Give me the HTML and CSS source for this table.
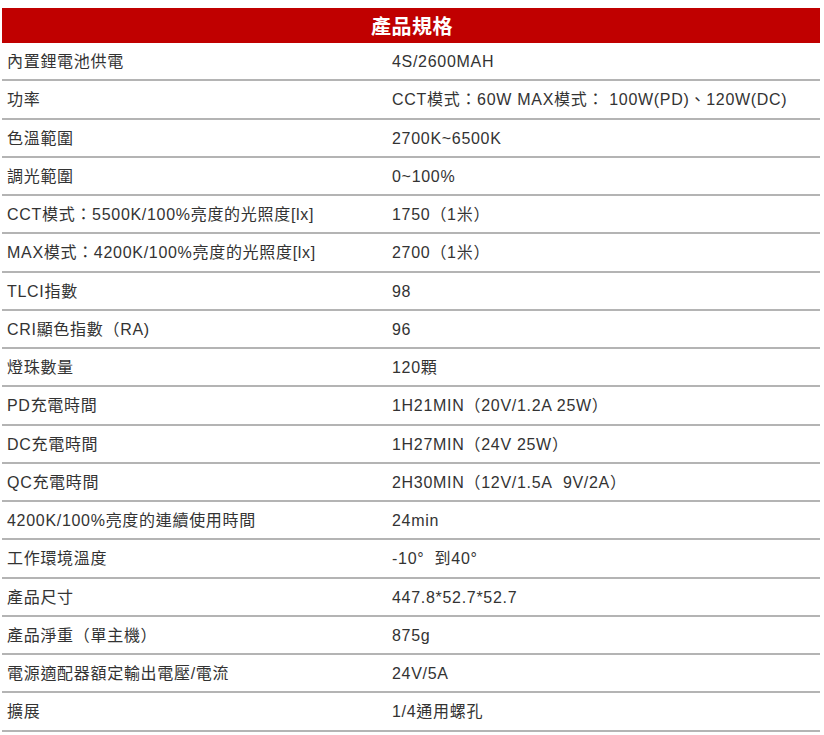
FILE: index.html
```html
<!DOCTYPE html>
<html lang="zh-Hant">
<head>
<meta charset="utf-8">
<title>產品規格</title>
<link rel="stylesheet" href="styles.css">
</head>
<body>
<div class="spec">
  <div class="spec-head">產品規格</div>
  <div class="row"><div class="key">內置鋰電池供電</div><div class="val">4S/2600MAH</div></div>
  <div class="row"><div class="key">功率</div><div class="val">CCT模式：60W MAX模式： 100W(PD)、120W(DC)</div></div>
  <div class="row"><div class="key">色溫範圍</div><div class="val">2700K~6500K</div></div>
  <div class="row"><div class="key">調光範圍</div><div class="val">0~100%</div></div>
  <div class="row"><div class="key">CCT模式：5500K/100%亮度的光照度[lx]</div><div class="val">1750（1米）</div></div>
  <div class="row"><div class="key">MAX模式：4200K/100%亮度的光照度[lx]</div><div class="val">2700（1米）</div></div>
  <div class="row"><div class="key">TLCI指數</div><div class="val">98</div></div>
  <div class="row"><div class="key">CRI顯色指數（RA)</div><div class="val">96</div></div>
  <div class="row"><div class="key">燈珠數量</div><div class="val">120顆</div></div>
  <div class="row"><div class="key">PD充電時間</div><div class="val">1H21MIN（20V/1.2A 25W）</div></div>
  <div class="row"><div class="key">DC充電時間</div><div class="val">1H27MIN（24V 25W）</div></div>
  <div class="row"><div class="key">QC充電時間</div><div class="val">2H30MIN（12V/1.5A&nbsp; 9V/2A）</div></div>
  <div class="row"><div class="key">4200K/100%亮度的連續使用時間</div><div class="val">24min</div></div>
  <div class="row"><div class="key">工作環境溫度</div><div class="val">-10°&nbsp; 到40°</div></div>
  <div class="row"><div class="key">產品尺寸</div><div class="val">447.8*52.7*52.7</div></div>
  <div class="row"><div class="key">產品淨重（單主機）</div><div class="val">875g</div></div>
  <div class="row"><div class="key">電源適配器額定輸出電壓/電流</div><div class="val">24V/5A</div></div>
  <div class="row"><div class="key">擴展</div><div class="val">1/4通用螺孔</div></div>
</div>
</body>
</html>
```
FILE: styles.css
```css
html, body {
  margin: 0;
  padding: 0;
  background: #ffffff;
}
body {
  font-family: "Liberation Sans", "Noto Sans CJK TC", sans-serif;
  color: #333333;
}
.spec {
  margin: 8px 4px 0 2px;
  width: 818px;
}
.spec-head {
  height: 35px;
  background: #c00000;
  color: #ffffff;
  font-family: "Noto Sans CJK TC", sans-serif;
  font-size: 20px;
  font-weight: 700;
  display: flex;
  align-items: center;
  padding-left: 369px;
  letter-spacing: 0.5px;
}
.row {
  display: grid;
  grid-template-columns: 386px 1fr;
  align-items: center;
  height: 36.25px;
  border-bottom: 2px solid #b4b4b4;
  font-size: 16px;
  line-height: 20px;
  letter-spacing: 0.7px;
}
.key {
  padding-left: 5px;
  white-space: nowrap;
  height: 20px;
  padding-top: 2px;
}
.val {
  padding-left: 4px;
  white-space: nowrap;
  height: 20px;
  padding-top: 2px;
}
```
